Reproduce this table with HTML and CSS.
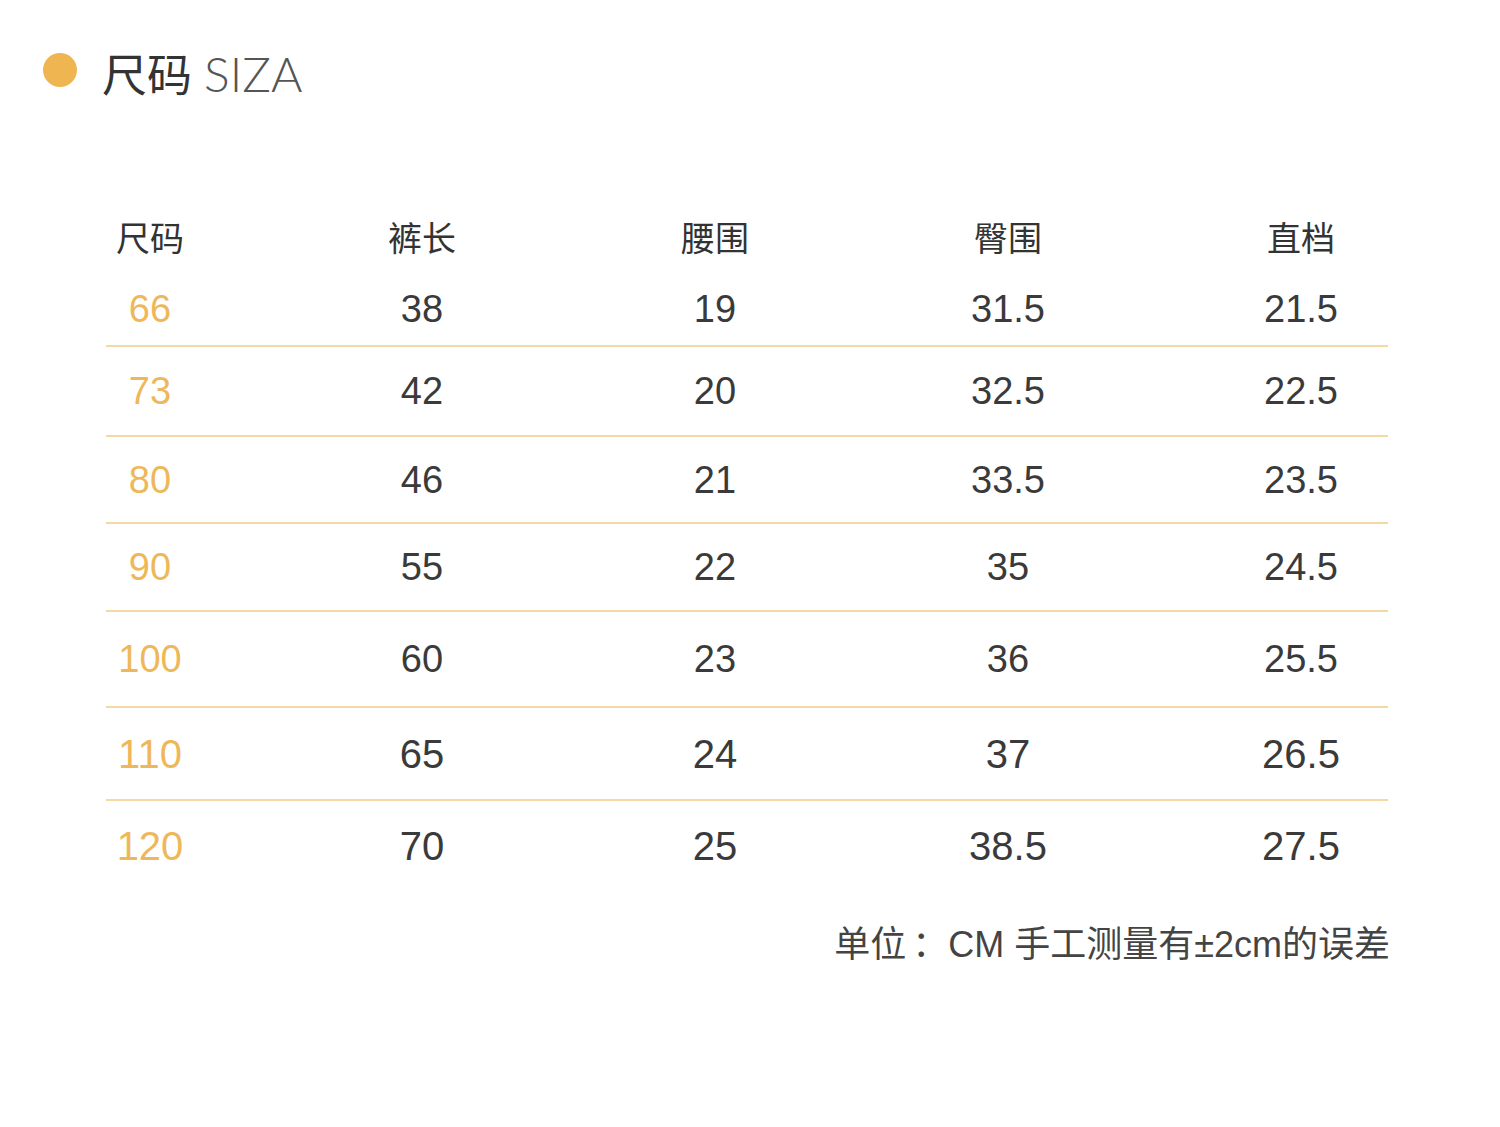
FILE: index.html
```html
<!DOCTYPE html>
<html lang="zh-CN">
<head>
<meta charset="utf-8">
<title>尺码 SIZA</title>
<link rel="stylesheet" href="styles.css">
</head>
<body>
<div class="page">
  <div class="heading">
    <span class="dot"></span>
    <span class="title-cn">尺码</span>
    <span class="title-en">SIZA</span>
  </div>

  <div class="table">
    <div class="row head">
      <div class="cell first">尺码</div>
      <div class="cell">裤长</div>
      <div class="cell">腰围</div>
      <div class="cell">臀围</div>
      <div class="cell">直档</div>
    </div>
    <div class="row">
      <div class="cell first size">66</div>
      <div class="cell">38</div>
      <div class="cell">19</div>
      <div class="cell">31.5</div>
      <div class="cell">21.5</div>
    </div>
    <div class="row">
      <div class="cell first size">73</div>
      <div class="cell">42</div>
      <div class="cell">20</div>
      <div class="cell">32.5</div>
      <div class="cell">22.5</div>
    </div>
    <div class="row">
      <div class="cell first size">80</div>
      <div class="cell">46</div>
      <div class="cell">21</div>
      <div class="cell">33.5</div>
      <div class="cell">23.5</div>
    </div>
    <div class="row">
      <div class="cell first size">90</div>
      <div class="cell">55</div>
      <div class="cell">22</div>
      <div class="cell">35</div>
      <div class="cell">24.5</div>
    </div>
    <div class="row">
      <div class="cell first size">100</div>
      <div class="cell">60</div>
      <div class="cell">23</div>
      <div class="cell">36</div>
      <div class="cell">25.5</div>
    </div>
    <div class="row big">
      <div class="cell first size">110</div>
      <div class="cell">65</div>
      <div class="cell">24</div>
      <div class="cell">37</div>
      <div class="cell">26.5</div>
    </div>
    <div class="row big">
      <div class="cell first size">120</div>
      <div class="cell">70</div>
      <div class="cell">25</div>
      <div class="cell">38.5</div>
      <div class="cell">27.5</div>
    </div>
  </div>

  <div class="note">单位<span class="colon">：</span>CM 手工测量有±2cm的误差</div>
</div>
</body>
</html>
```
FILE: styles.css
```css
* { box-sizing: border-box; }
html, body {
  margin: 0;
  background: #ffffff;
}
body {
  font-family: "Liberation Sans", "Noto Sans CJK SC", sans-serif;
  color: #3a3a3a;
}
.page {
  width: 1500px;
  height: 1127px;
  padding-top: 50px;
}
.heading {
  display: flex;
  align-items: center;
  height: 44px;
  padding-left: 43px;
}
.dot {
  width: 34px;
  height: 34px;
  border-radius: 50%;
  background: #eeb550;
  margin-right: 25px;
  margin-top: -4px;
}
.title-cn {
  font-family: "Noto Sans CJK SC", sans-serif;
  font-size: 45px;
  color: #333333;
  line-height: 1;
  margin-right: 12px;
}
.title-en {
  font-family: "Lato", "Open Sans", sans-serif;
  font-weight: 300;
  font-size: 48px;
  color: #555555;
  line-height: 1;
  margin-top: 4px;
}
.table {
  margin-top: 107px;
  margin-left: 106px;
  width: 1282px;
}
.row {
  display: grid;
  grid-template-columns: 103px repeat(4, 160px);
  column-gap: 133px;
  align-items: center;
  height: 88px;
  border-bottom: 2px solid #f6d8a4;
  font-size: 38px;
}
.row.head {
  height: 72px;
  border-bottom: none;
  font-family: "Noto Sans CJK SC", sans-serif;
  font-size: 34px;
  color: #333333;
}
.row:nth-child(2) { height: 74px; }
.row:nth-child(3) { height: 90px; }
.row:nth-child(4) { height: 87px; }
.row:nth-child(6) { height: 96px; }
.row:nth-child(7) { height: 93px; }
.row:last-child { border-bottom: none; height: 90px; }
.row.big { font-size: 40px; }
.cell {
  text-align: center;
  line-height: 1;
}
.cell.first {
  width: 88px;
}
.size {
  color: #eeb85a;
}
.note {
  width: 1284px;
  margin-left: 106px;
  margin-top: 32px;
  text-align: right;
  font-size: 36px;
  color: #444444;
  line-height: 1;
}
.colon {
  display: inline-block;
  padding-left: 6px;
  font-family: "Noto Sans CJK SC", sans-serif;
}
```
